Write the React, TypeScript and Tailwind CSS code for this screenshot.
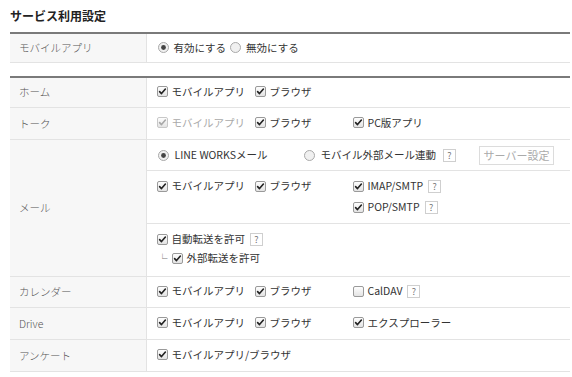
import React from "react";

const FONT = { fontFamily: '"Noto Sans CJK JP", "Liberation Sans", sans-serif' };

function Check({ checked = true, disabled = false }: { checked?: boolean; disabled?: boolean }) {
  return (
    <svg width="11" height="11" viewBox="0 0 11 11" className="shrink-0">
      <defs>
        <linearGradient id="cbg" x1="0" y1="0" x2="0" y2="1">
          <stop offset="0" stopColor="#ffffff" />
          <stop offset="1" stopColor="#e2e2e2" />
        </linearGradient>
      </defs>
      <rect
        x="0.5"
        y="0.5"
        width="10"
        height="10"
        rx="1.5"
        fill="url(#cbg)"
        stroke={disabled ? "#c8c8c8" : "#9a9a9a"}
      />
      {checked && (
        <path
          d="M2.6 5.6 L4.5 7.6 L8.4 3"
          fill="none"
          stroke={disabled ? "#a8a8a8" : "#222"}
          strokeWidth="1.6"
          strokeLinecap="round"
          strokeLinejoin="round"
        />
      )}
    </svg>
  );
}

function Radio({ checked }: { checked?: boolean }) {
  return (
    <svg width="11" height="11" viewBox="0 0 11 11" className="shrink-0">
      <circle cx="5.5" cy="5.5" r="5" fill="#f0f0f0" stroke="#a8a8a8" />
      {checked && <circle cx="5.5" cy="5.5" r="2.4" fill="#444" />}
    </svg>
  );
}

function Help() {
  return (
    <span className="inline-flex items-center justify-center w-[13px] h-[13px] border border-[#cfcfcf] bg-white text-[9px] leading-none text-[#777] ml-[1px]">
      ?
    </span>
  );
}

function Item({
  label,
  disabled,
  checked = true,
  help,
}: {
  label: string;
  disabled?: boolean;
  checked?: boolean;
  help?: boolean;
}) {
  return (
    <span className="inline-flex items-center gap-[4px] whitespace-nowrap">
      <Check checked={checked} disabled={disabled} />
      <span className={disabled ? "text-[#aaa]" : ""}>{label}</span>
      {help && <Help />}
    </span>
  );
}

// label column
const TH = "w-[136px] bg-[#f7f7f7] border-r border-[#e3e3e3] pl-[9px] text-left font-light text-[#555] align-middle";
const TD = "pl-[10px] align-middle";
const TR = "border-b border-[#e3e3e3]";

function Cols({ a, b, c }: { a: React.ReactNode; b: React.ReactNode; c?: React.ReactNode }) {
  return (
    <div className="grid grid-cols-[98px_98px_auto] items-center">
      <div>{a}</div>
      <div>{b}</div>
      <div>{c}</div>
    </div>
  );
}

export default function App() {
  return (
    <div className="bg-white w-[572px] h-[377px] text-[10.5px] text-[#333] pt-[7px] pl-[10px]" style={FONT}>
      <h2 className="text-[12px] font-bold leading-[18px] text-[#222]">サービス利用設定</h2>

      <table className="mt-[7px] w-[560px] border-collapse border-t-2 border-[#7a7a7a]">
        <tbody>
          <tr className={TR}>
            <th className={`${TH} h-[29px]`}>モバイルアプリ</th>
            <td className={TD}>
              <div className="flex items-center">
                <span className="inline-flex items-center gap-[5px] ml-[1px]">
                  <Radio checked />
                  <span>有効にする</span>
                </span>
                <span className="inline-flex items-center gap-[5px] ml-[4px]">
                  <Radio />
                  <span>無効にする</span>
                </span>
              </div>
            </td>
          </tr>
        </tbody>
      </table>

      <table className="mt-[13px] w-[560px] border-collapse border-t-2 border-[#7a7a7a]">
        <tbody>
          <tr className={TR}>
            <th className={`${TH} h-[31px]`}>ホーム</th>
            <td className={TD}>
              <Cols a={<Item label="モバイルアプリ" />} b={<Item label="ブラウザ" />} />
            </td>
          </tr>
          <tr className={TR}>
            <th className={`${TH} h-[32px]`}>トーク</th>
            <td className={TD}>
              <Cols
                a={<Item label="モバイルアプリ" disabled />}
                b={<Item label="ブラウザ" />}
                c={<Item label="PC版アプリ" />}
              />
            </td>
          </tr>
          <tr className={TR}>
            <th className={TH} rowSpan={3}>
              メール
            </th>
            <td className={`${TD} h-[31px]`}>
              <div className="flex items-center">
                <span className="inline-flex items-center gap-[6px] ml-[1px] w-[146px]">
                  <Radio checked />
                  <span>LINE WORKSメール</span>
                </span>
                <span className="inline-flex items-center gap-[6px]">
                  <Radio />
                  <span>モバイル外部メール連動</span>
                  <Help />
                </span>
                <span className="ml-[23px] inline-flex items-center justify-center w-[75px] h-[19px] border border-[#dcdcdc] text-[#aaa] text-[11px]">
                  サーバー設定
                </span>
              </div>
            </td>
          </tr>
          <tr className={TR}>
            <td className={`${TD} h-[53px] align-top pt-[7px]`}>
              <div className="grid grid-cols-[98px_98px_auto]">
                <div className="h-[16px] flex items-center">
                  <Item label="モバイルアプリ" />
                </div>
                <div className="h-[16px] flex items-center">
                  <Item label="ブラウザ" />
                </div>
                <div className="flex flex-col gap-[5px]">
                  <div className="h-[16px] flex items-center">
                    <Item label="IMAP/SMTP" help />
                  </div>
                  <div className="h-[16px] flex items-center">
                    <Item label="POP/SMTP" help />
                  </div>
                </div>
              </div>
            </td>
          </tr>
          <tr className={TR}>
            <td className={`${TD} h-[53px] align-top pt-[7px]`}>
              <div className="flex flex-col gap-[3px]">
                <div className="h-[16px] flex items-center">
                  <Item label="自動転送を許可" help />
                </div>
                <div className="h-[16px] flex items-center">
                  <span className="text-[#777] ml-[1px] mr-[4px] text-[10px]">└</span>
                  <Item label="外部転送を許可" />
                </div>
              </div>
            </td>
          </tr>
          <tr className={TR}>
            <th className={`${TH} h-[31px]`}>カレンダー</th>
            <td className={TD}>
              <Cols
                a={<Item label="モバイルアプリ" />}
                b={<Item label="ブラウザ" />}
                c={<Item label="CalDAV" checked={false} help />}
              />
            </td>
          </tr>
          <tr className={TR}>
            <th className={`${TH} h-[32px]`}>Drive</th>
            <td className={TD}>
              <Cols
                a={<Item label="モバイルアプリ" />}
                b={<Item label="ブラウザ" />}
                c={<Item label="エクスプローラー" />}
              />
            </td>
          </tr>
          <tr className={TR}>
            <th className={`${TH} h-[32px]`}>アンケート</th>
            <td className={TD}>
              <Item label="モバイルアプリ/ブラウザ" />
            </td>
          </tr>
        </tbody>
      </table>
    </div>
  );
}
